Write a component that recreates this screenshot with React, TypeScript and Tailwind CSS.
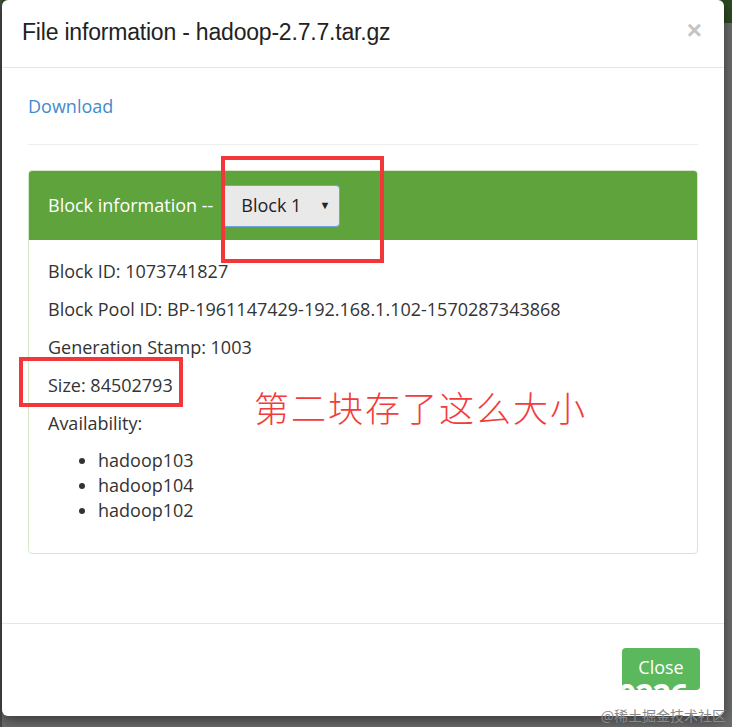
import React from "react";

const rows = [
  "Block ID: 1073741827",
  "Block Pool ID: BP-1961147429-192.168.1.102-1570287343868",
  "Generation Stamp: 1003",
  "Size: 84502793",
  "Availability:",
];

const hosts = ["hadoop103", "hadoop104", "hadoop102"];

const App = () => {
  return (
    <div className="relative w-[732px] h-[727px] overflow-hidden bg-[#6c6c6c] font-['Open_Sans',sans-serif]">
      {/* page behind the backdrop */}
      <div className="h-[23px] bg-[#2e4a22]" />
      <div className="absolute left-0 top-0 h-full w-[2px] bg-[#4a4a4a]" />

      {/* modal */}
      <div className="absolute left-[2px] top-0 w-[722px] h-[716px] bg-white rounded-md shadow-[0_4px_14px_rgba(0,0,0,0.5)] flex flex-col">
        <div className="flex items-center justify-between h-[68px] pl-[20px] pr-[22px] border-b border-[#e5e5e5]">
          <h4 className="text-[23px] text-[#222] font-['Liberation_Sans',Arial,sans-serif] tracking-[-0.2px] -mt-[2px]">
            File information - hadoop-2.7.7.tar.gz
          </h4>
          <span className="text-[26px] leading-none font-bold text-[#c4c4c4] font-['Liberation_Sans',Arial,sans-serif] -mt-[8px]">
            ×
          </span>
        </div>

        <div className="flex-1 px-[26px] pt-[25px]">
          <a className="text-[18px] text-[#428bca]">Download</a>
          <div className="mt-[24px] border-t border-[#eeeeee]" />

          <div className="mt-[25px] border border-[#d6e9c6] rounded-[4px] overflow-hidden">
            <div className="h-[69px] bg-[#5fa33d] flex items-center pl-[19px] gap-[8px]">
              <span className="text-[18px] text-white">Block information --</span>
              <div className="w-[119px] h-[42px] rounded-[4px] bg-[#e9e9e9] border border-[#6ea3dc] flex items-center justify-between pl-[19px] pr-[9px]">
                <span className="text-[18px] text-[#222]">Block 1</span>
                <span className="text-[11px] text-[#222]">▼</span>
              </div>
            </div>
            <div className="pl-[19px] pt-[19px] pb-[30px] text-[18px] text-[#333]">
              {rows.map((r) => (
                <p key={r} className="leading-[25px] mb-[13px]">
                  {r}
                </p>
              ))}
              <ul className="list-disc pl-[50px] leading-[25px] -mt-[1px]">
                {hosts.map((h) => (
                  <li key={h}>{h}</li>
                ))}
              </ul>
            </div>
          </div>
        </div>

        <div className="h-[93px] border-t border-[#e5e5e5] flex justify-end pr-[24px] pt-[24px]">
          <div className="relative w-[78px] h-[42px] rounded-[4px] bg-[#5cb85c] overflow-hidden flex justify-center pt-[6px]">
            <span className="text-[18px] text-white">Close</span>
            <span className="absolute left-[-4px] top-[31px] text-[32px] leading-none font-bold text-white tracking-[-1px]">
              0226
            </span>
          </div>
        </div>
      </div>

      {/* annotations */}
      <div className="absolute left-[221px] top-[156px] w-[163px] h-[107px] border-[4px] border-[#f2373a]" />
      <div className="absolute left-[19px] top-[357px] w-[164px] h-[50px] border-[4px] border-[#f2373a]" />
      <span className="absolute left-[254px] top-[385px] text-[35px] leading-[44px] text-[#f23c3c] font-light tracking-[2px] font-['Noto_Sans_CJK_SC',sans-serif]">
        第二块存了这么大小
      </span>

      <span className="absolute right-[6px] bottom-[1px] text-[14px] text-[#8a8a8a] font-['Noto_Sans_CJK_SC',sans-serif]">
        @稀土掘金技术社区
      </span>
    </div>
  );
};

export default App;
